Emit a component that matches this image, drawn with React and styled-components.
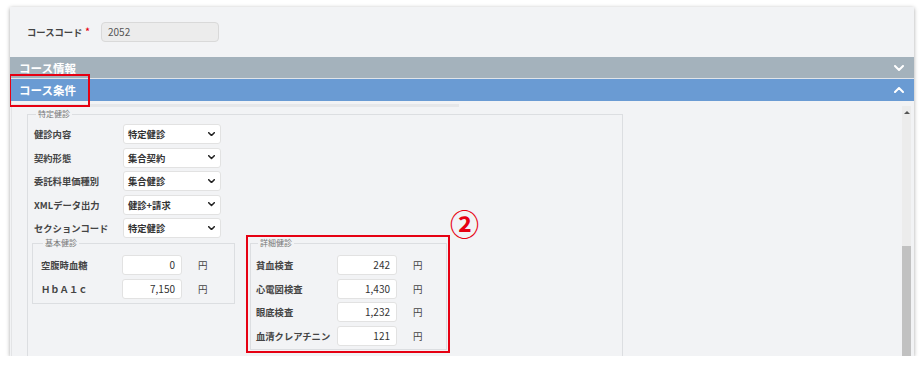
import React from "react";
import styled, { createGlobalStyle } from "styled-components";

const COLORS = {
  page: "#ffffff",
  panel: "#f2f3f5",
  gray: "#a4b2bc",
  blue: "#6a9bd3",
  label: "#444444",
  text: "#333333",
  line: "#dcdee1",
  red: "#e60012",
};

const GlobalStyle = createGlobalStyle`
  html, body {
    margin: 0;
    background: ${COLORS.page};
    font-family: "Noto Sans CJK JP", "Noto Sans", sans-serif;
  }
`;

const Frame = styled.div({
  position: "relative",
  margin: "7px 0 0 10px",
  width: 904,
  height: 349,
  backgroundColor: COLORS.panel,
  boxShadow: "0 1px 4px rgba(0,0,0,0.35)",
  overflow: "hidden",
  display: "flex",
  flexDirection: "column",
});

const CodeRow = styled.div({
  display: "flex",
  alignItems: "center",
  height: 50,
  boxSizing: "border-box",
  paddingLeft: 17,
});

const CodeLabel = styled.span({
  width: 74,
  fontSize: 9.3,
  fontWeight: 700,
  color: COLORS.label,
  whiteSpace: "nowrap",
});

const Required = styled.sup({
  color: COLORS.red,
  fontSize: 9,
  marginLeft: 3,
  verticalAlign: 1,
});

const ReadOnlyInput = styled.div({
  width: 118,
  height: 20,
  boxSizing: "border-box",
  border: "1px solid #d9d9d9",
  borderRadius: 4,
  backgroundColor: "#ececec",
  fontSize: 10,
  color: "#555",
  lineHeight: "18px",
  paddingLeft: 6,
});

const SectionBar = styled.div(({ active }) => ({
  display: "flex",
  alignItems: "center",
  justifyContent: "space-between",
  height: active ? 22 : 21,
  padding: "0 10px 0 9px",
  backgroundColor: active ? COLORS.blue : COLORS.gray,
  borderTop: active ? "1px solid #dfe4ea" : "none",
  color: "#fff",
  fontSize: 11.5,
  fontWeight: 700,
  flexShrink: 0,
}));

const Body = styled.div({
  flex: 1,
  display: "flex",
  minHeight: 0,
});

const Main = styled.div({
  flex: 1,
  paddingTop: 3,
  borderLeft: "1px solid #e3e4e6",
  marginLeft: 1,
});

const TabStrip = styled.div({
  width: 447,
  height: 3,
  backgroundColor: "#e6e7e9",
  marginBottom: 2,
});

const Fieldset = styled.fieldset(({ width, pad }) => ({
  margin: 0,
  width,
  boxSizing: "border-box",
  border: `1px solid ${COLORS.line}`,
  padding: pad,
  minWidth: 0,
}));

const Legend = styled.legend({
  fontSize: 8,
  lineHeight: "10px",
  color: "#777",
  padding: "0 2px",
  marginLeft: 2,
});

const OuterFieldset = styled(Fieldset)({
  marginLeft: 15,
});

const Rows = styled.div({
  display: "flex",
  flexDirection: "column",
  gap: 3.5,
});

const Row = styled.div({
  display: "flex",
  alignItems: "center",
  height: 20,
});

const Label = styled.span(({ w }) => ({
  width: w,
  flexShrink: 0,
  fontSize: 9.3,
  fontWeight: 700,
  color: COLORS.label,
  whiteSpace: "nowrap",
}));

const Select = styled.div({
  width: 98,
  height: 20,
  boxSizing: "border-box",
  display: "flex",
  alignItems: "center",
  justifyContent: "space-between",
  padding: "0 5px 0 4px",
  backgroundColor: "#fff",
  border: "1px solid #e2e2e2",
  borderRadius: 3,
  fontSize: 9.3,
  fontWeight: 700,
  color: COLORS.text,
});

const NumberBox = styled.div({
  width: 60,
  height: 20,
  boxSizing: "border-box",
  backgroundColor: "#fff",
  border: "1px solid #e2e2e2",
  borderRadius: 3,
  fontSize: 10,
  color: COLORS.text,
  textAlign: "right",
  lineHeight: "18px",
  paddingRight: 6,
});

const Unit = styled.span({
  marginLeft: 16,
  fontSize: 9.5,
  color: COLORS.label,
});

const SubGroups = styled.div({
  display: "flex",
  alignItems: "flex-start",
  marginLeft: -2,
});

const Highlight = styled.div({
  position: "relative",
  marginTop: -3,
  marginLeft: 11,
  padding: "1px 1px 1px 2px",
  border: `2px solid ${COLORS.red}`,
});

const Marker = styled.span({
  position: "absolute",
  left: "calc(100% + 2px)",
  bottom: "100%",
  marginBottom: -1,
  color: COLORS.red,
  fontSize: 29,
  fontWeight: 700,
  lineHeight: "29px",
});

const Callout = styled.div({
  position: "absolute",
  left: -1,
  top: 67,
  width: 81,
  height: 33,
  boxSizing: "border-box",
  border: `2px solid ${COLORS.red}`,
});

const Scrollbar = styled.div({
  width: 9,
  margin: "5px 3px 0 0",
  backgroundColor: "#ececec",
  display: "flex",
  flexDirection: "column",
  alignItems: "center",
});

const ScrollArrow = styled.div({
  width: 0,
  height: 0,
  marginTop: 5,
  borderLeft: "3px solid transparent",
  borderRight: "3px solid transparent",
  borderBottom: "3px solid #555",
});

const ScrollThumb = styled.div({
  marginTop: "auto",
  width: "100%",
  height: 110,
  backgroundColor: "#c1c1c1",
});

function Chevron({ up, color = "#fff", size = 10, weight = 2 }) {
  return (
    <svg width={size} height={size * 0.6} viewBox="0 0 10 6">
      <path
        d={up ? "M1 5 L5 1 L9 5" : "M1 1 L5 5 L9 1"}
        fill="none"
        stroke={color}
        strokeWidth={weight}
        strokeLinecap="round"
        strokeLinejoin="round"
      />
    </svg>
  );
}

const selects = [
  ["健診内容", "特定健診"],
  ["契約形態", "集合契約"],
  ["委託料単価種別", "集合健診"],
  ["XMLデータ出力", "健診+請求"],
  ["セクションコード", "特定健診"],
];

const basic = [
  ["空腹時血糖", "0"],
  ["ＨｂＡ１ｃ", "7,150"],
];

const detail = [
  ["貧血検査", "242"],
  ["心電図検査", "1,430"],
  ["眼底検査", "1,232"],
  ["血清クレアチニン", "121"],
];

function PriceRows({ items, labelWidth }) {
  return (
    <Rows>
      {items.map(([label, value]) => (
        <Row key={label}>
          <Label w={labelWidth}>{label}</Label>
          <NumberBox>{value}</NumberBox>
          <Unit>円</Unit>
        </Row>
      ))}
    </Rows>
  );
}

export default function App() {
  return (
    <>
      <GlobalStyle />
      <Frame>
        <CodeRow>
          <CodeLabel>
            コースコード<Required>*</Required>
          </CodeLabel>
          <ReadOnlyInput>2052</ReadOnlyInput>
        </CodeRow>

        <SectionBar>
          コース情報
          <Chevron />
        </SectionBar>
        <SectionBar active>
          コース条件
          <Chevron up />
        </SectionBar>

        <Body>
          <Main>
            <TabStrip />
            <OuterFieldset width={596} pad="5px 6px 20px">
              <Legend>特定健診</Legend>
              <Rows>
                {selects.map(([label, value]) => (
                  <Row key={label}>
                    <Label w={89}>{label}</Label>
                    <Select>
                      {value}
                      <Chevron color="#222" size={7} weight={2.2} />
                    </Select>
                  </Row>
                ))}
              </Rows>

              <SubGroups>
                <Fieldset width={203} pad="7px 8px 4px">
                  <Legend>基本健診</Legend>
                  <PriceRows items={basic} labelWidth={81} />
                </Fieldset>

                <Highlight>
                  <Marker>②</Marker>
                  <Fieldset width={197} pad="7px 5px 3px">
                    <Legend>詳細健診</Legend>
                    <PriceRows items={detail} labelWidth={81} />
                  </Fieldset>
                </Highlight>
              </SubGroups>
            </OuterFieldset>
          </Main>

          <Scrollbar>
            <ScrollArrow />
            <ScrollThumb />
          </Scrollbar>
        </Body>

        <Callout />
      </Frame>
    </>
  );
}
